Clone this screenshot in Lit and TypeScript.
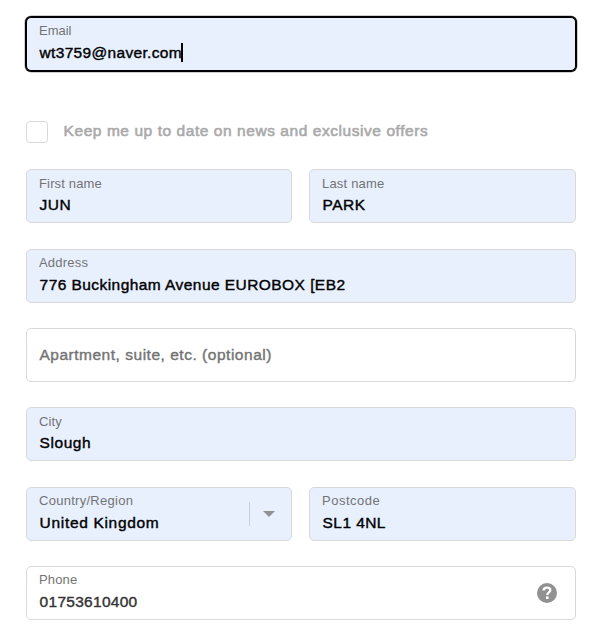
import { LitElement, html, css, nothing } from "lit";
import { customElement, property } from "lit/decorators.js";
import { classMap } from "lit/directives/class-map.js";
import { styleMap } from "lit/directives/style-map.js";

@customElement("form-field")
class FormField extends LitElement {
  @property() label = "";
  @property() value = "";
  @property() kind = "";
  @property({ type: Boolean }) filled = false;
  @property({ type: Boolean }) focused = false;
  @property({ type: Number }) labelTrack = 0;
  @property({ type: Number }) track = 0;
  @property({ type: Number }) labelTop = 7;

  static styles = css`
    :host { display: block; min-width: 0; }
    .box {
      box-sizing: border-box;
      height: 54px;
      display: flex;
      align-items: stretch;
      border: 1px solid #d9d9d9;
      border-radius: 5px;
      background: #fff;
      color: #333;
      padding-left: 12px;
    }
    .filled { background: #e8f0fe; color: #000; }
    .focused { border-color: #000; box-shadow: 0 0 0 1px #000, 0 0 0 1.5px #00000060; }
    .text { flex: 1; display: flex; flex-direction: column; white-space: nowrap; }
    .label { font-size: 13px; line-height: 14px; height: 14px; color: #737373; }
    .row { display: flex; height: 20px; margin-top: 5px; padding-left: 0.6px; }
    .value { font-size: 15.5px; line-height: 20px; -webkit-text-stroke: 0.4px currentColor; }
    .placeholder { color: #737373; margin-top: 16px; padding-left: 0.4px; }
    .caret { width: 2px; height: 19px; background: #000; margin-left: -1px; }
    .arrow {
      align-self: center;
      display: flex;
      align-items: center;
      width: 42px;
      height: 24px;
      box-sizing: border-box;
      border-left: 1px solid #c9ced9;
      padding-left: 13px;
    }
    .help { align-self: center; width: 20px; height: 20px; margin-right: 18px; }
    svg { display: block; }
  `;

  render() {
    const tracking = { letterSpacing: `${this.track}px` };
    return html`
      <div class=${classMap({ box: true, filled: this.filled, focused: this.focused })}>
        <div class="text">
          ${this.value
            ? html`
                <div class="label" style=${styleMap({ letterSpacing: `${this.labelTrack}px`, marginTop: `${this.labelTop - 1}px`, marginBottom: `${7 - this.labelTop}px` })}>${this.label}</div>
                <div class="row">
                  <span class="value" style=${styleMap(tracking)}>${this.value}</span>
                  ${this.focused ? html`<span class="caret"></span>` : nothing}
                </div>`
            : html`<div class="value placeholder" style=${styleMap(tracking)}>${this.label}</div>`}
        </div>
        ${this.kind === "select"
          ? html`<div class="arrow"><svg width="12" height="6" viewBox="0 0 12 6"><path d="M0 0h12L6 6z" fill="#919191" /></svg></div>`
          : nothing}
        ${this.kind === "help"
          ? html`<svg class="help" viewBox="0 0 20 20">
              <circle cx="10" cy="10" r="10" fill="#919191" />
              <path d="M6.6 7.5C6.7 5.5 8 4.7 10 4.7c2 0 3.3 .9 3.3 2.5 0 2.3-3 2.2-3 4.8" fill="none" stroke="#fff" stroke-width="2.3" />
              <rect x="9" y="13.4" width="2.6" height="2.6" fill="#fff" />
            </svg>`
          : nothing}
      </div>
    `;
  }
}

@customElement("app-root")
class AppRoot extends LitElement {
  static styles = css`
    :host {
      display: block;
      box-sizing: border-box;
      height: 642px;
      padding: 17px 25px 0 26px;
      background: #fff;
      font-family: "Liberation Sans", Arial, sans-serif;
    }
    .optin { display: flex; align-items: center; height: 22px; margin: 50px 0 26px; }
    .check { box-sizing: border-box; width: 22px; height: 22px; border: 1px solid #d9d9d9; border-radius: 4px; }
    .note {
      margin: 0 0 2px 15.6px;
      font-size: 15.5px;
      line-height: 20px;
      letter-spacing: 0.56px;
      color: #aaa;
      white-space: nowrap;
      -webkit-text-stroke: 0.6px currentColor;
    }
    .form { display: grid; grid-template-columns: 266px 267px; column-gap: 17px; grid-template-rows: 80px 79px 79px 80px 79px 54px; }
    .wide { grid-column: 1 / -1; }
  `;

  render() {
    return html`
      <form-field filled focused label="Email" value="wt3759@naver.com" .track=${0.32} .labelTrack=${0}></form-field>
      <div class="optin">
        <span class="check"></span>
        <span class="note">Keep me up to date on news and exclusive offers</span>
      </div>
      <div class="form">
        <form-field filled label="First name" value="JUN" .track=${0.45} .labelTrack=${0.15} .labelTop=${8}></form-field>
        <form-field filled label="Last name" value="PARK" .track=${0.5} .labelTrack=${0.2} .labelTop=${8}></form-field>
        <form-field class="wide" filled label="Address" value="776 Buckingham Avenue EUROBOX [EB2" .track=${0.44} .labelTrack=${0.2}></form-field>
        <form-field class="wide" label="Apartment, suite, etc. (optional)" .track=${0.52}></form-field>
        <form-field class="wide" filled label="City" value="Slough" .track=${0.55} .labelTrack=${0.15} .labelTop=${8}></form-field>
        <form-field filled kind="select" label="Country/Region" value="United Kingdom" .track=${0.68} .labelTrack=${0.28}></form-field>
        <form-field filled label="Postcode" value="SL1 4NL" .track=${0.42} .labelTrack=${0.5}></form-field>
        <form-field class="wide" kind="help" label="Phone" value="01753610400" .track=${0.28} .labelTrack=${0.15}></form-field>
      </div>
    `;
  }
}
